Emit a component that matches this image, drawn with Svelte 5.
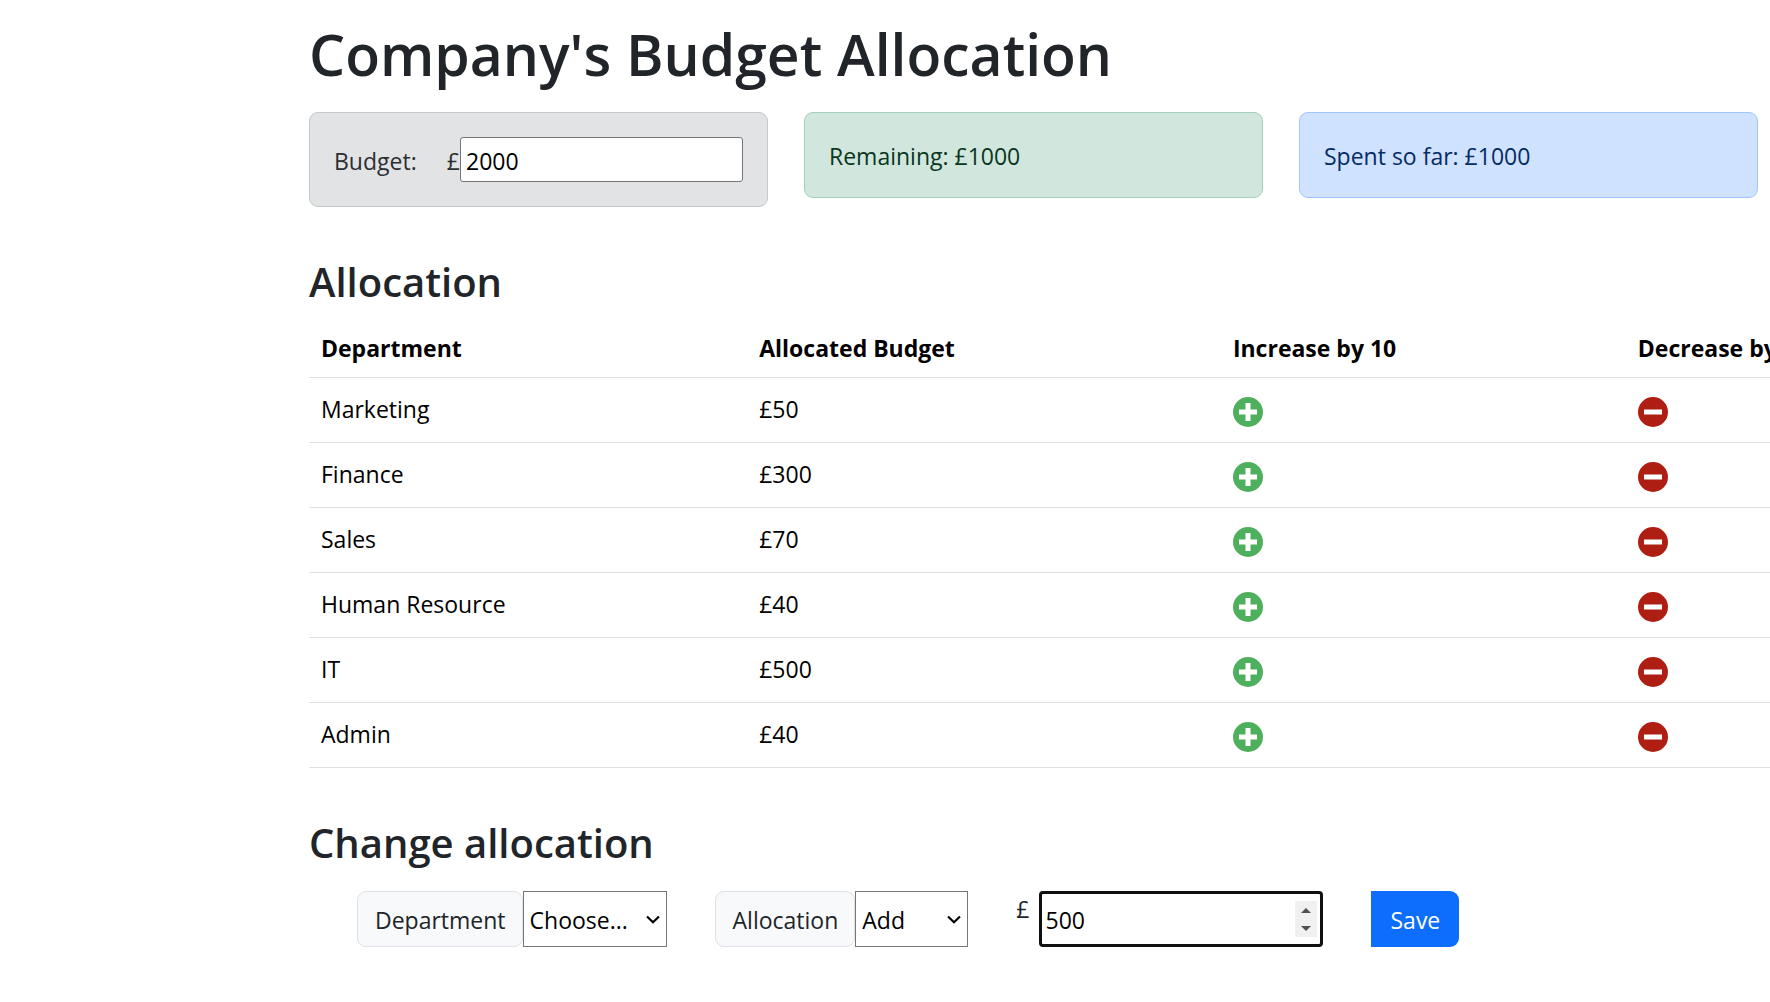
<script>
  let budget = $state(2000);
  let amount = $state(500);
  let department = $state('');
  let action = $state('Add');
  let departments = $state([
    { name: 'Marketing', cost: 50 },
    { name: 'Finance', cost: 300 },
    { name: 'Sales', cost: 70 },
    { name: 'Human Resource', cost: 40 },
    { name: 'IT', cost: 500 },
    { name: 'Admin', cost: 40 }
  ]);
  let spent = $derived(departments.reduce((sum, d) => sum + d.cost, 0));

  function save() {
    const item = departments.find((d) => d.name === department);
    if (item) item.cost += action === 'Add' ? amount : -amount;
  }
</script>

{#snippet chevron()}
  <svg class="chevron" viewBox="0 0 14 9" aria-hidden="true">
    <path d="M1 1.5 7 7.3 13 1.5" fill="none" stroke="currentColor" stroke-width="2.2" />
  </svg>
{/snippet}

<main class="page">
  <h1>Company's Budget Allocation</h1>

  <div class="summary">
    <div class="alert secondary">
      <label for="budget">Budget:</label>
      <span class="currency">£</span>
      <input id="budget" type="text" bind:value={budget} />
    </div>
    <div class="alert success">Remaining: £{budget - spent}</div>
    <div class="alert primary">Spent so far: £{spent}</div>
  </div>

  <h2>Allocation</h2>
  <div class="table-wrap">
    <table>
      <thead>
        <tr>
          <th scope="col" class="name">Department</th>
          <th scope="col" class="cost">Allocated Budget</th>
          <th scope="col" class="step">Increase by 10</th>
          <th scope="col">Decrease by 10</th>
        </tr>
      </thead>
      <tbody>
        {#each departments as item}
          <tr>
            <td>{item.name}</td>
            <td>£{item.cost}</td>
            <td>
              <button class="icon" aria-label="Increase {item.name}" onclick={() => (item.cost += 10)}>
                <svg viewBox="0 0 30 30">
                  <circle cx="15" cy="15" r="15" fill="#4eaf5c" />
                  <path d="M6 15h18M15 6v18" stroke="#fff" stroke-width="5" />
                </svg>
              </button>
            </td>
            <td>
              <button class="icon" aria-label="Decrease {item.name}" onclick={() => (item.cost -= 10)}>
                <svg viewBox="0 0 30 30">
                  <circle cx="15" cy="15" r="15" fill="#ae1e12" />
                  <path d="M6 15h18" stroke="#fff" stroke-width="5" />
                </svg>
              </button>
            </td>
          </tr>
        {/each}
      </tbody>
    </table>
  </div>

  <h2>Change allocation</h2>
  <div class="form">
    <div class="group">
      <label for="department">Department</label>
      <div class="select">
        <select id="department" class="wide" bind:value={department}>
          <option value="">Choose...</option>
          {#each departments as item}
            <option value={item.name}>{item.name}</option>
          {/each}
        </select>
        {@render chevron()}
      </div>
    </div>
    <div class="group">
      <label for="action">Allocation</label>
      <div class="select">
        <select id="action" class="narrow" bind:value={action}>
          <option value="Add">Add</option>
          <option value="Reduce">Reduce</option>
        </select>
        {@render chevron()}
      </div>
    </div>
    <div class="amount">
      <span class="pound">£</span>
      <div class="number">
        <input type="number" aria-label="Amount" bind:value={amount} />
        <div class="spinner">
          <button aria-label="Step up" onclick={() => (amount += 1)}>
            <svg viewBox="0 0 10 5"><path d="M0 5 5 0l5 5z" fill="#505050" /></svg>
          </button>
          <button aria-label="Step down" onclick={() => (amount -= 1)}>
            <svg viewBox="0 0 10 5"><path d="M0 0 5 5l5-5z" fill="#505050" /></svg>
          </button>
        </div>
      </div>
    </div>
    <button class="save" onclick={save}>Save</button>
  </div>
</main>

<style>
  :global(body) {
    margin: 0;
    background: #fff;
  }
  .page,
  .page * {
    box-sizing: border-box;
  }
  .page {
    overflow-x: hidden;
    padding: 18px 12px 48px 309px;
    color: #212529;
    font-family: 'Segoe UI', 'Open Sans', 'Noto Sans', sans-serif;
    font-size: 23px;
    line-height: 36px;
  }
  input,
  select,
  button {
    margin: 0;
    color: #000;
    font: inherit;
  }
  button {
    border: 0;
    cursor: pointer;
  }
  h1,
  h2 {
    margin: 0;
    font-weight: 600;
    white-space: nowrap;
  }
  h1 {
    margin-bottom: 22px;
    font-size: 57px;
    line-height: 72px;
  }
  h2 {
    margin-bottom: 10px;
    font-size: 40px;
    line-height: 50px;
  }

  .summary {
    display: grid;
    grid-template-columns: repeat(3, minmax(0, 1fr));
    align-items: start;
    gap: 36px;
    margin-bottom: 50px;
  }
  .alert {
    padding: 25px 24px 23px;
    border: 1px solid;
    border-radius: 9px;
    white-space: nowrap;
  }
  .secondary {
    display: flex;
    align-items: center;
    padding: 24px;
    background: #e2e3e5;
    border-color: #c4c8cb;
    color: #2b2f32;
  }
  .secondary label,
  .currency {
    padding-top: 2px;
  }
  .success {
    background: #d1e7dd;
    border-color: #a3cfbb;
    color: #0a3622;
  }
  .primary {
    background: #cfe2ff;
    border-color: #9ec5fe;
    color: #052c65;
  }
  .currency {
    margin-left: auto;
  }
  .secondary input {
    width: 283px;
    height: 45px;
    padding: 4px 5px 2px;
    border: 1px solid #767676;
    border-radius: 3px;
    background: #fff;
  }

  .table-wrap {
    margin: 0 -62px 50px 0;
  }
  table {
    width: 100%;
    border-collapse: collapse;
    table-layout: fixed;
    color: #000;
  }
  th,
  td {
    padding: 13px 12px 11px;
    border-bottom: 1px solid #dee2e6;
    text-align: left;
    vertical-align: top;
    white-space: nowrap;
  }
  .name {
    width: 29%;
  }
  .cost {
    width: 31.35%;
  }
  .step {
    width: 26.8%;
  }
  .icon {
    display: block;
    height: 40px;
    padding: 6px 0 4px;
    background: none;
  }
  .icon svg {
    display: block;
    width: 30px;
    height: 30px;
  }

  .form {
    display: flex;
    gap: 48px;
    padding: 13px 0 0 48px;
  }
  .group {
    display: flex;
    height: 56px;
  }
  .group label {
    display: flex;
    align-items: center;
    padding: 2px 16px 0 17px;
    border: 1px solid #dee2e6;
    border-radius: 9px;
    background: #f8f9fa;
  }
  .select {
    position: relative;
  }
  select {
    height: 56px;
    padding: 2px 6px 0;
    border: 1px solid #767676;
    border-radius: 0;
    background: #fff;
    appearance: none;
  }
  .wide {
    width: 144px;
  }
  .narrow {
    width: 113px;
  }
  .chevron {
    position: absolute;
    top: 24px;
    right: 7px;
    width: 14px;
    height: 9px;
    color: #000;
    pointer-events: none;
  }
  .amount {
    display: flex;
    gap: 10px;
  }
  .number {
    display: flex;
    align-items: center;
    width: 284px;
    height: 56px;
    padding-right: 3px;
    border: 3px solid #101010;
    border-radius: 4px;
  }
  .number input {
    flex: 1;
    min-width: 0;
    height: 50px;
    padding: 2px 3px 0;
    border: 0;
    outline: 0;
    background: none;
    appearance: textfield;
  }
  .number input::-webkit-inner-spin-button {
    display: none;
  }
  .spinner {
    display: grid;
    width: 22px;
    height: 36px;
    background: #f0f0f0;
  }
  .spinner button {
    display: grid;
    place-items: center;
    padding: 0;
    background: none;
  }
  .spinner svg {
    width: 10px;
    height: 5px;
  }
  .save {
    padding: 2px 19px 0;
    border-radius: 0 9px 9px 0;
    background: #0d6efd;
    color: #fff;
  }
</style>
